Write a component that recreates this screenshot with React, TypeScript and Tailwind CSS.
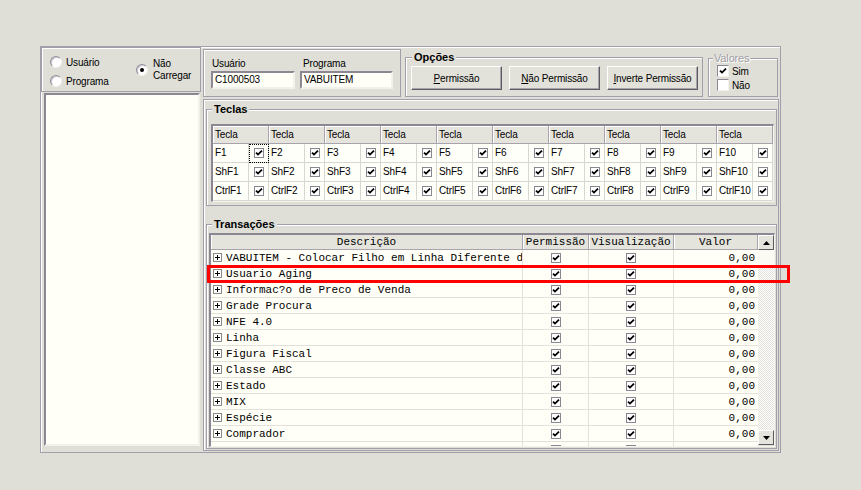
import React from "react";

const keyRows = ["F", "ShF", "CtrlF"];

const transacoes = [
  "VABUITEM - Colocar Filho em Linha Diferente d",
  "Usuario Aging",
  "Informac?o de Preco de Venda",
  "Grade Procura",
  "NFE 4.0",
  "Linha",
  "Figura Fiscal",
  "Classe ABC",
  "Estado",
  "MIX",
  "Espécie",
  "Comprador",
  "",
];

function Check() {
  return (
    <span className="flex h-[10px] w-[10px] shrink-0 items-center justify-center border border-[#8a8590] bg-white">
      <svg width="8" height="8" viewBox="0 0 8 8">
        <path d="M1 3.6 L3 5.6 L7 1.6" fill="none" stroke="#000" strokeWidth="1.8" />
      </svg>
    </span>
  );
}

function Radio({ on = false }: { on?: boolean }) {
  return (
    <span className="flex h-[12px] w-[12px] shrink-0 items-center justify-center rounded-full border border-[#948e9a] border-b-[#f2f2ec] border-r-[#f2f2ec] bg-white shadow-[inset_1px_1px_0_#c9c5cc]">
      {on && <span className="h-[4px] w-[4px] rounded-full bg-black" />}
    </span>
  );
}

function BigCheck({ on = false }: { on?: boolean }) {
  return (
    <span className="flex h-[12px] w-[12px] items-center justify-center border border-[#8d8693] border-b-[#f2f2ec] border-r-[#f2f2ec] bg-white">
      {on && (
        <svg width="8" height="8" viewBox="0 0 8 8">
          <path d="M1 3.6 L3 5.6 L7 1.6" fill="none" stroke="#000" strokeWidth="1.8" />
        </svg>
      )}
    </span>
  );
}

function Btn({ u, rest }: { u: string; rest: string }) {
  return (
    <button className="h-[24px] w-[91px] border border-b-[#5e5a62] border-l-white border-r-[#5e5a62] border-t-white bg-[#e2e2da] text-[10px] shadow-[inset_-1px_-1px_0_#a8a3ac]">
      <span className="underline">{u}</span>
      {rest}
    </button>
  );
}

function PlusBox() {
  return (
    <span className="flex h-[9px] w-[9px] shrink-0 items-center justify-center border border-[#8a8a8a] bg-white">
      <svg width="7" height="7" viewBox="0 0 7 7">
        <path d="M1 3.5 H6 M3.5 1 V6" stroke="#000" strokeWidth="1" />
      </svg>
    </span>
  );
}

export default function App() {
  return (
    <div className="relative h-[490px] w-[861px] overflow-hidden bg-[#dfdfd7] pl-[40px] pt-[46px] font-['Liberation_Sans',Arial,sans-serif] text-[10px] tracking-[-0.15px] text-black">
      {/* main frame */}
      <div className="flex h-[407px] w-[741px] gap-[2px] border border-[#a49eaa] shadow-[inset_1px_1px_0_#fff]">
        {/* left column */}
        <div className="flex w-[160px] flex-col">
          <div className="flex h-[45px] border border-[#a49eaa] pl-[8px] pt-[8px] shadow-[inset_1px_1px_0_#fff]">
            <div className="flex w-[86px] flex-col gap-[7px]">
              <div className="flex h-[12px] items-center gap-[4px]">
                <Radio />
                <span>Usuário</span>
              </div>
              <div className="flex h-[12px] items-center gap-[4px]">
                <Radio />
                <span>Programa</span>
              </div>
            </div>
            <div className="mt-[3px] flex h-[22px] items-center gap-[5px]">
              <Radio on />
              <span className="leading-[12px]">
                Não
                <br />
                Carregar
              </span>
            </div>
          </div>
          <div className="ml-[3px] mt-[1px] h-[353px] w-[156px] border-2 border-b-[#f2f2ec] border-l-[#8d8693] border-r-[#f2f2ec] border-t-[#8d8693] bg-[#fffff7]" />
        </div>

        {/* right column */}
        <div className="flex w-[576px] flex-col">
          <div className="flex h-[51px] items-start">
            <div className="mt-[2px] flex h-[48px] w-[198px] gap-[5px] border border-[#a49eaa] pl-[7px] pt-[8px] shadow-[inset_1px_1px_0_#fff]">
              <div className="flex w-[84px] flex-col">
                <span className="h-[12px] pl-[1px] leading-[12px]">Usuário</span>
                <div className="mt-[1px] h-[18px] border-2 border-b-[#f2f2ec] border-l-[#8d8693] border-r-[#f2f2ec] border-t-[#8d8693] bg-[#fffff7] pl-[2px] leading-[14px]">
                  C1000503
                </div>
              </div>
              <div className="flex w-[93px] flex-col">
                <span className="h-[12px] pl-[3px] leading-[12px]">Programa</span>
                <div className="mt-[1px] h-[18px] border-2 border-b-[#f2f2ec] border-l-[#8d8693] border-r-[#f2f2ec] border-t-[#8d8693] bg-[#fffff7] pl-[2px] leading-[14px]">
                  VABUITEM
                </div>
              </div>
            </div>

            <fieldset className="ml-[4px] mt-[4px] h-[46px] w-[298px] border border-[#a49eaa] shadow-[inset_1px_1px_0_#fff]">
              <legend className="ml-[6px] bg-[#dfdfd7] px-[2px] text-[11px] font-bold leading-[12px] tracking-normal">
                Opções
              </legend>
              <div className="mt-[3px] flex gap-[7px] pl-[5px]">
                <Btn u="P" rest="ermissão" />
                <Btn u="N" rest="ão Permissão" />
                <Btn u="I" rest="nverte Permissão" />
              </div>
            </fieldset>

            <fieldset className="ml-[5px] mt-[5px] h-[45px] w-[70px] border border-[#a49eaa] shadow-[inset_1px_1px_0_#fff]">
              <legend className="ml-[4px] bg-[#dfdfd7] px-[1px] text-[11px] leading-[12px] text-[#a39fa8] [text-shadow:1px_1px_0_#fff]">
                Valores
              </legend>
              <div className="flex flex-col gap-[2px] pl-[8px] pt-[1px]">
                <div className="flex h-[12px] items-center gap-[3px]">
                  <BigCheck on />
                  <span>Sim</span>
                </div>
                <div className="flex h-[12px] items-center gap-[3px]">
                  <BigCheck />
                  <span>Não</span>
                </div>
              </div>
            </fieldset>
          </div>

          {/* lower panel */}
          <div className="mt-[1px] h-[352px] border border-[#a49eaa] shadow-[inset_1px_1px_0_#fff]">
            <fieldset className="ml-[2px] mt-[3px] h-[103px] w-[571px] border border-[#a49eaa] shadow-[inset_1px_1px_0_#fff]">
              <legend className="ml-[5px] bg-[#dfdfd7] px-[2px] text-[11px] font-bold leading-[12px] tracking-normal">
                Teclas
              </legend>
              <div className="ml-[4px] mt-[9px] w-[563px] border-b border-l-2 border-r border-t-2 border-b-[#f4f4ee] border-l-[#8d8693] border-r-[#f4f4ee] border-t-[#8d8693]">
                <div className="flex h-[18px]">
                  {Array.from({ length: 10 }).map((_, i) => (
                    <div
                      key={i}
                      className="w-[56px] border-b border-r border-b-[#a8a3ac] border-r-[#a8a3ac] bg-[#e4e4dc] pl-[2px] leading-[17px] shadow-[inset_1px_1px_0_#fff]"
                    >
                      Tecla
                    </div>
                  ))}
                </div>
                {keyRows.map((k, r) => (
                  <div key={k} className="flex h-[19px]">
                    {Array.from({ length: 10 }).map((_, i) => (
                      <div key={i} className="flex w-[56px]">
                        <div className="w-[36px] border-b border-r border-[#d8d8d0] bg-[#fffffa] pl-[2px] leading-[18px]">
                          {k}
                          {i + 1}
                        </div>
                        <div
                          className={
                            r === 0 && i === 0
                              ? "flex w-[20px] items-center justify-center border-b border-r border-[#d8d8d0] bg-[#fffffa] outline-1 -outline-offset-1 outline-black outline-dotted"
                              : "flex w-[20px] items-center justify-center border-b border-r border-[#d8d8d0] bg-[#fffffa]"
                          }
                        >
                          <Check />
                        </div>
                      </div>
                    ))}
                  </div>
                ))}
              </div>
            </fieldset>

            <fieldset className="ml-[2px] mt-[12px] h-[231px] w-[571px] border border-[#a49eaa] shadow-[inset_1px_1px_0_#fff]">
              <legend className="ml-[5px] bg-[#dfdfd7] px-[2px] text-[11px] font-bold leading-[12px] tracking-normal">
                Transações
              </legend>
              <div className="ml-[2px] mt-[3px] flex h-[214px] w-[566px] overflow-hidden border-b border-l-2 border-r border-t-2 border-b-[#f4f4ee] border-l-[#8d8693] border-r-[#f4f4ee] border-t-[#8d8693] font-['Liberation_Mono','Courier_New',monospace] text-[11px] tracking-normal">
                <div className="flex w-[547px] flex-col overflow-hidden">
                  <div className="flex h-[15px] shrink-0 bg-[#e4e4dc] leading-[15px]">
                    <div className="w-[312px] border-b border-r border-[#a8a3ac] text-center shadow-[inset_1px_0_0_#fff]">
                      Descrição
                    </div>
                    <div className="w-[66px] border-b border-r border-[#a8a3ac] text-center shadow-[inset_1px_0_0_#fff]">
                      Permissão
                    </div>
                    <div className="w-[85px] border-b border-r border-[#a8a3ac] text-center shadow-[inset_1px_0_0_#fff]">
                      Visualização
                    </div>
                    <div className="w-[84px] border-b border-r border-[#a8a3ac] text-center shadow-[inset_1px_0_0_#fff]">
                      Valor
                    </div>
                  </div>
                  <div className="flex-1 overflow-hidden bg-[#fffff7]">
                    {transacoes.map((t, i) => (
                      <div key={i} className="flex h-[16px] border-b border-[#e2e2da]">
                        <div className="flex w-[312px] items-center overflow-hidden whitespace-nowrap border-r border-[#e2e2da] pl-[2px]">
                          {t && <PlusBox />}
                          {t && <span className="ml-[4px] pt-[2px]">{t}</span>}
                        </div>
                        <div className="flex w-[66px] items-center justify-center border-r border-[#e2e2da]">
                          <Check />
                        </div>
                        <div className="flex w-[85px] items-center justify-center border-r border-[#e2e2da]">
                          <Check />
                        </div>
                        <div className="flex w-[84px] items-center justify-end pr-[3px] pt-[2px]">{t && "0,00"}</div>
                      </div>
                    ))}
                  </div>
                </div>

                {/* scrollbar */}
                <div className="flex w-[16px] flex-col">
                  <div className="flex h-[15px] items-center justify-center border border-b-[#5e5a62] border-l-white border-r-[#5e5a62] border-t-white bg-[#e4e4dc]">
                    <svg width="7" height="4" viewBox="0 0 7 4">
                      <path d="M0 4 L3.5 0 L7 4 Z" fill="#000" />
                    </svg>
                  </div>
                  <div className="h-[16px] bg-[#fbfbf3]" />
                  <div className="flex-1 bg-[image:repeating-conic-gradient(#ffffff_0%_25%,#e2e2da_0%_50%)] bg-[length:2px_2px]" />
                  <div className="flex h-[15px] items-center justify-center border border-b-[#5e5a62] border-l-white border-r-[#5e5a62] border-t-white bg-[#e4e4dc]">
                    <svg width="7" height="4" viewBox="0 0 7 4">
                      <path d="M0 0 L3.5 4 L7 0 Z" fill="#000" />
                    </svg>
                  </div>
                  <div className="h-[1px]" />
                </div>
              </div>
            </fieldset>
          </div>
        </div>
      </div>

      {/* red highlight annotation */}
      <div className="absolute left-[207px] top-[265px] h-[18px] w-[583px] border-[3px] border-[#ff0000]" />
    </div>
  );
}
